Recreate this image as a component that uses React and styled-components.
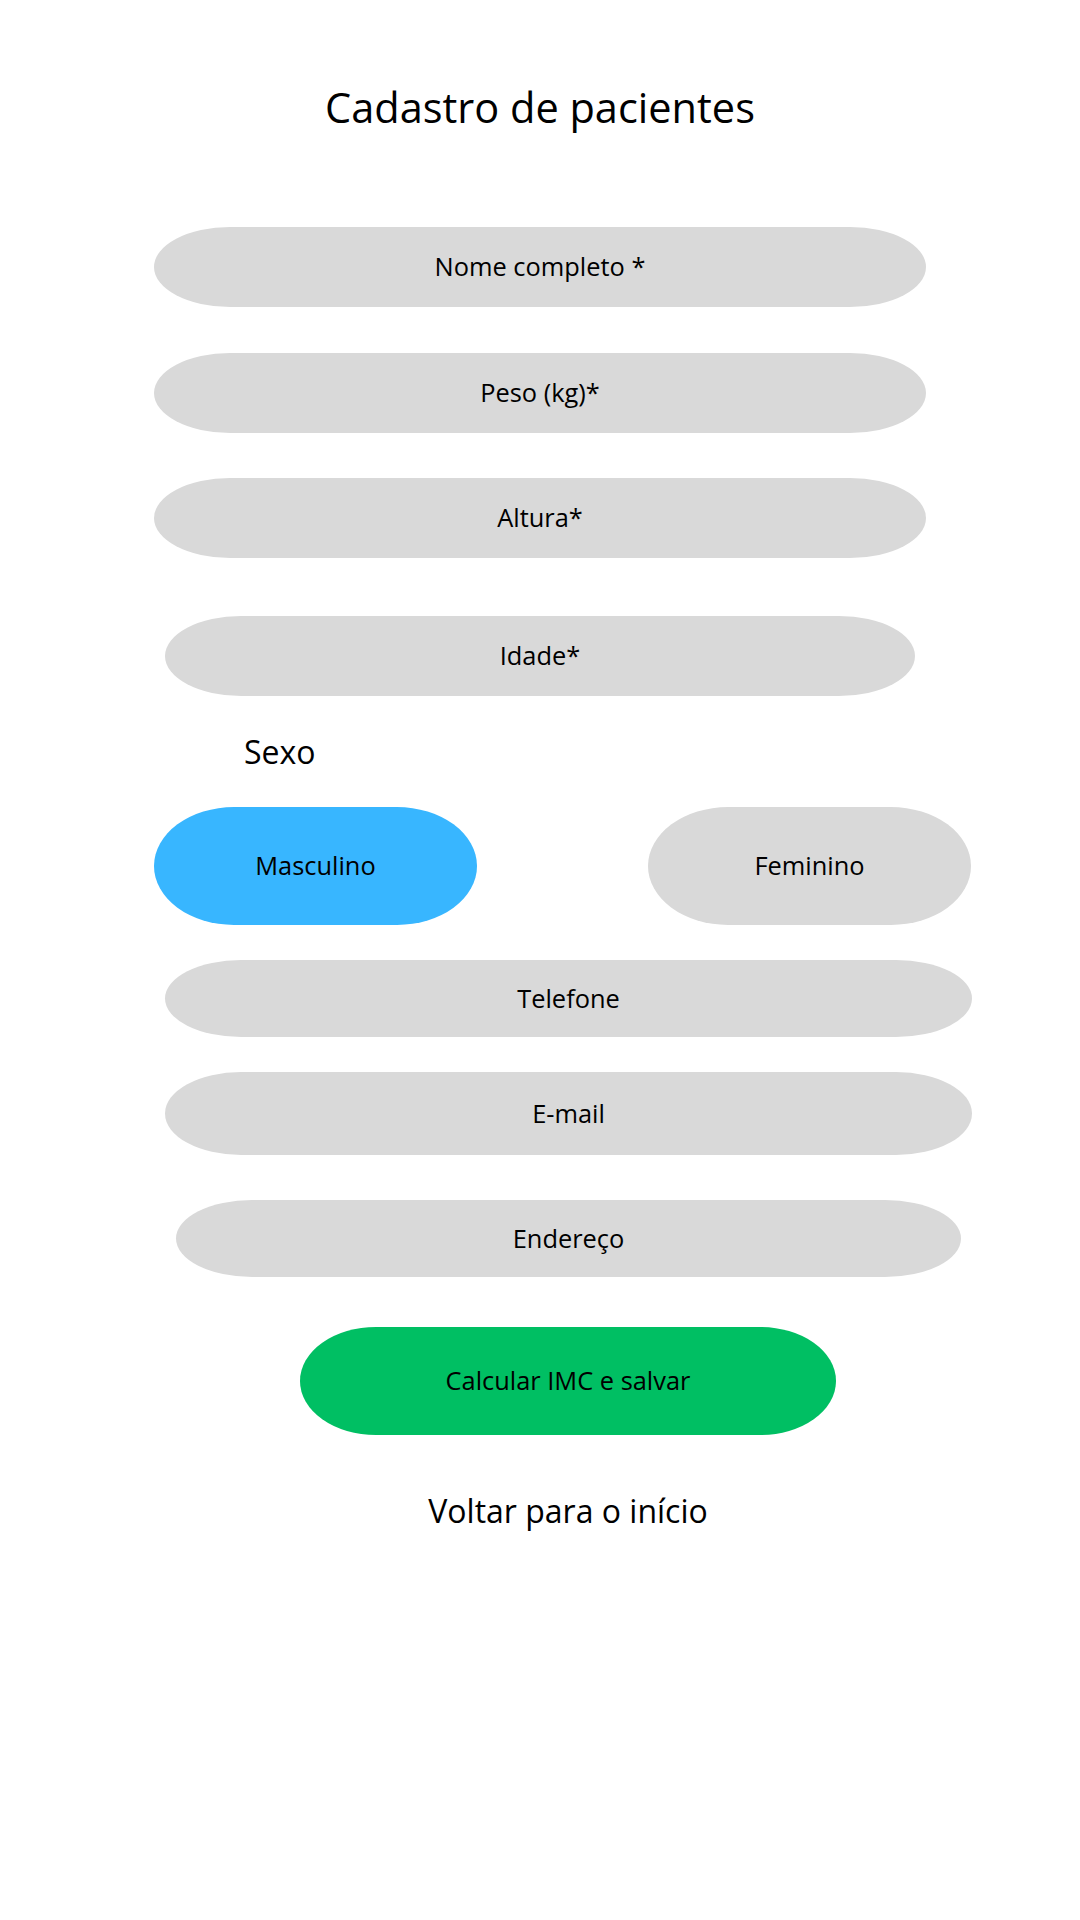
import React, { useState } from "react";
import styled, { createGlobalStyle } from "styled-components";

const GlobalStyle = createGlobalStyle`
  body {
    margin: 0;
    background: #ffffff;
    font-family: "Open Sans", "Noto Sans", sans-serif;
    color: #000000;
  }
`;

const Page = styled.div`
  width: 1080px;
  min-height: 1920px;
  display: flex;
  flex-direction: column;
  align-items: flex-start;
`;

const Title = styled.h1`
  align-self: stretch;
  margin: 80px 0 0;
  font-size: 41.5px;
  line-height: 54px;
  font-weight: 400;
  text-align: center;
`;

const Field = styled.input`
  box-sizing: border-box;
  margin: ${(p) => p.$top}px 0 0 ${(p) => p.$left}px;
  width: ${(p) => p.$width}px;
  height: ${(p) => p.$height || 80}px;
  padding: 0 0 2px;
  border: none;
  outline: none;
  border-radius: 76px / 50%;
  background: #d9d9d9;
  font-family: inherit;
  font-size: 25.4px;
  text-align: center;
  color: #000;

  &::placeholder {
    color: #000;
  }
`;

const Label = styled.div`
  margin: 35px 0 0 244px;
  font-size: 32px;
  line-height: 42px;
`;

const SexRow = styled.div`
  margin: 34px 0 0 154px;
  width: 817px;
  display: flex;
  justify-content: space-between;
`;

const Choice = styled.button`
  width: 323px;
  height: 118px;
  padding: 0 0 2px;
  border: none;
  border-radius: 80px / 50%;
  background: ${(p) => (p.$active ? "#38b6ff" : "#d9d9d9")};
  font-family: inherit;
  font-size: 25.4px;
  color: #000;
  cursor: pointer;
`;

const Submit = styled.button`
  margin: 50px 0 0 300px;
  width: 536px;
  height: 108px;
  padding: 0 0 2px;
  border: none;
  border-radius: 76px / 50%;
  background: #00bf63;
  font-family: inherit;
  font-size: 25.4px;
  color: #000;
  cursor: pointer;
`;

const BackLink = styled.a`
  margin: 54px 0 0 300px;
  width: 536px;
  font-size: 32px;
  line-height: 44px;
  text-align: center;
  color: #000;
  text-decoration: none;
  cursor: pointer;
`;

export default function App() {
  const [sexo, setSexo] = useState("masculino");

  return (
    <>
      <GlobalStyle />
      <Page>
        <Title>Cadastro de pacientes</Title>
        <Field $top={93} $left={154} $width={772} placeholder="Nome completo *" />
        <Field $top={46} $left={154} $width={772} placeholder="Peso (kg)*" />
        <Field $top={45} $left={154} $width={772} placeholder="Altura*" />
        <Field $top={58} $left={165} $width={750} placeholder="Idade*" />
        <Label>Sexo</Label>
        <SexRow>
          <Choice $active={sexo === "masculino"} onClick={() => setSexo("masculino")}>
            Masculino
          </Choice>
          <Choice $active={sexo === "feminino"} onClick={() => setSexo("feminino")}>
            Feminino
          </Choice>
        </SexRow>
        <Field $top={35} $left={165} $width={807} $height={77} placeholder="Telefone" />
        <Field $top={35} $left={165} $width={807} $height={83} placeholder="E-mail" />
        <Field $top={45} $left={176} $width={785} $height={77} placeholder="Endereço" />
        <Submit>Calcular IMC e salvar</Submit>
        <BackLink>Voltar para o início</BackLink>
      </Page>
    </>
  );
}
